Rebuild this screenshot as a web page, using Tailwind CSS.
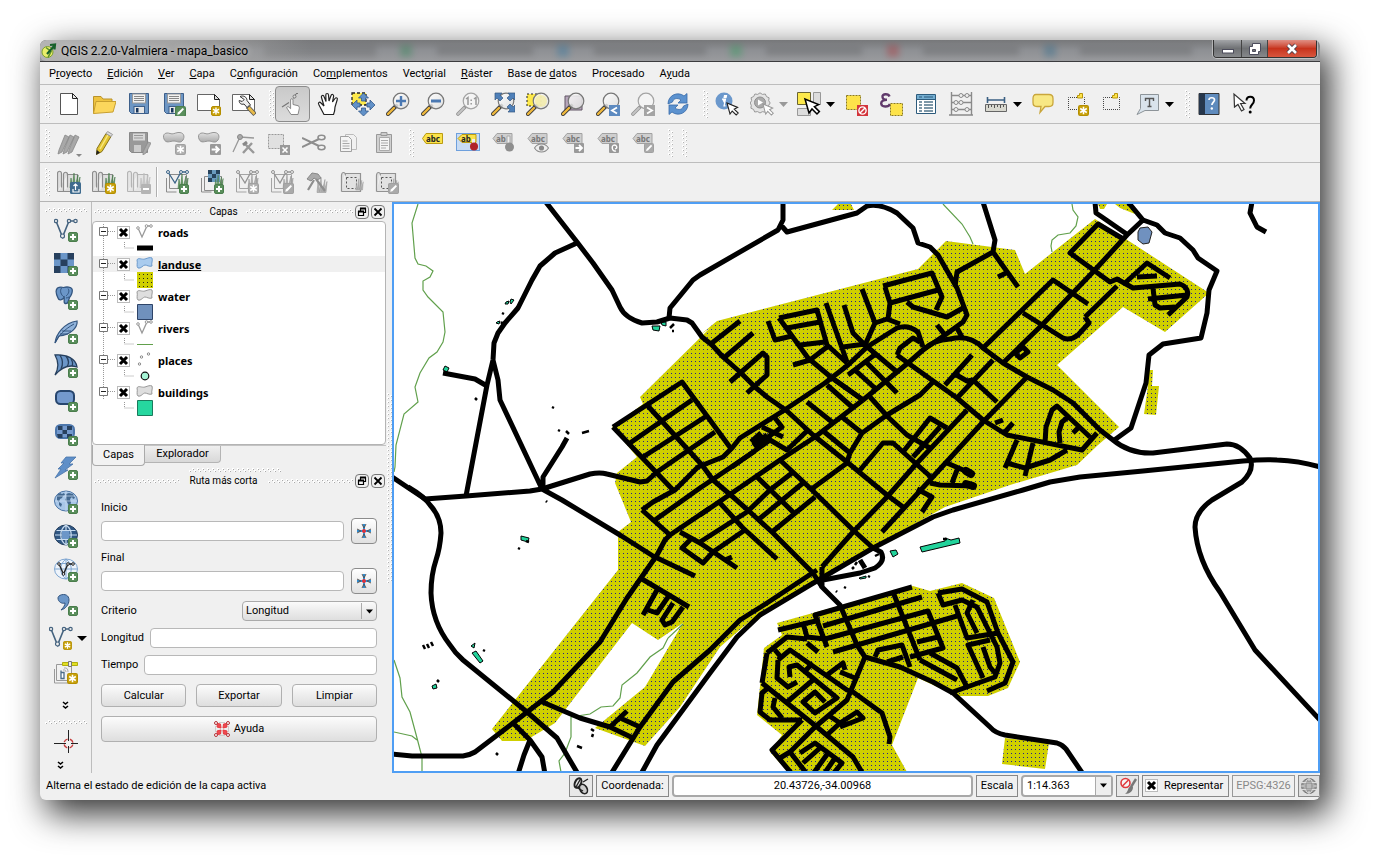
<!DOCTYPE html>
<html lang="es">
<head>
<meta charset="utf-8">
<title>QGIS 2.2.0-Valmiera - mapa_basico</title>
<script src="https://cdn.jsdelivr.net/npm/@tailwindcss/browser@4"></script>
</head>
<body class="bg-white font-['Roboto','Liberation_Sans',sans-serif] text-[11px] leading-4 text-black">

<!-- icon library -->
<svg class="absolute size-0" aria-hidden="true">
  <defs>
    <pattern id="gripV" width="6" height="4" patternUnits="userSpaceOnUse"><path d="M0 0h2v2h-2zM3 2h2v2h-2z" fill="#fff"/><path d="M1 1h1v1h-1zM4 3h1v1h-1z" fill="#b4b4b4"/></pattern>
    <pattern id="gripH" width="5" height="5" patternUnits="userSpaceOnUse"><path d="M0 2h2v2h-2zM3 0h2v2h-2z" fill="#fff"/><path d="M1 3h1v1h-1zM4 1h1v1h-1z" fill="#aaa"/></pattern>
    <pattern id="dots" x="394" y="204" width="4" height="4" patternUnits="userSpaceOnUse"><rect width="4" height="4" fill="#cfcf00"/><rect x="1" y="1" width="1" height="1" fill="#22228a"/></pattern>
    <linearGradient id="lens" x1="0" y1="0" x2="1" y2="1"><stop offset="0" stop-color="#fff"/><stop offset="1" stop-color="#dcdcdc"/></linearGradient>
    <linearGradient id="blob" x1="0" y1="0" x2="0" y2="1"><stop offset="0" stop-color="#e2e2e2"/><stop offset="1" stop-color="#aaa"/></linearGradient>
  </defs>
  <symbol id="plus" viewBox="0 0 10 10"><rect x=".5" y=".5" width="9" height="9" rx="1.5" fill="#5a8f5c" stroke="#4a7d4c"/><path d="M5 2v6M2 5h6" stroke="#fff" stroke-width="2"/></symbol>
  <symbol id="star" viewBox="0 0 10 10"><rect x=".5" y=".5" width="9" height="9" rx="1.5" fill="#c9a20c" stroke="#b48e00"/><path d="M5 1.5v7M2 3.2l6 3.6M8 3.2L2 6.800" stroke="#fff" stroke-width="1.400"/></symbol>
  <symbol id="gstar" viewBox="0 0 10 10"><rect x=".5" y=".5" width="9" height="9" rx="1.500" fill="#b0b0b0" stroke="#a0a0a0"/><path d="M5 1.5v7M2 3.200l6 3.600M8 3.200L2 6.800" stroke="#fff" stroke-width="1.400"/></symbol>
  <symbol id="pen" viewBox="0 0 10 10"><rect x=".5" y=".5" width="9" height="9" rx="1.500" fill="#5a8f5c" stroke="#4a7d4c"/><path d="M2 8l.6-2L7 1.800 8.200 3 4 7.400z" fill="#fff"/></symbol>
  <symbol id="gpen" viewBox="0 0 10 10"><rect x=".5" y=".5" width="9" height="9" rx="1" fill="#aaa" stroke="#a0a0a0"/><path d="M2 8l.6-2L7 1.800 8.200 3 4 7.400z" fill="#fff"/></symbol>
  <symbol id="garrow" viewBox="0 0 10 10"><rect width="10" height="10" rx="1" fill="#9a9a9a"/><path d="M1.500 5h6M5 2l3 3-3 3" fill="none" stroke="#fff" stroke-width="1.800"/></symbol>
  <symbol id="mag" viewBox="0 0 24 24"><path d="M2 22l8-8" stroke="#3c3c3c" stroke-width="4" stroke-linecap="round"/><path d="M2 22l6-6" stroke="#f0b93c" stroke-width="2.400" stroke-linecap="round"/><path d="M9.500 14.500l2-2" stroke="#111" stroke-width="3"/><circle cx="15" cy="9" r="7.800" fill="url(#lens)" fill-opacity=".85" stroke="#777" stroke-width="1.200"/></symbol>
  <symbol id="gmag" viewBox="0 0 24 24"><path d="M2 22l8-8" stroke="#929292" stroke-width="3.600" stroke-linecap="round"/><path d="M2 22l6-6" stroke="#c4c4c4" stroke-width="2" stroke-linecap="round"/><circle cx="15" cy="9" r="7.800" fill="#f4f4f4" stroke="#a4a4a4" stroke-width="1.200"/></symbol>
  <symbol id="ptr" viewBox="0 0 13 14"><path d="M1 1l3 11 2.200-3 4 4 2-2-4-3.800 3.400-1.800z" fill="#fff" stroke="#222" stroke-width="1.100"/></symbol>
  <symbol id="gptr" viewBox="0 0 13 14"><path d="M1 1l3 11 2.200-3 4 4 2-2-4-3.800 3.400-1.800z" fill="#fff" stroke="#999" stroke-width="1.100"/></symbol>

  <symbol id="new" viewBox="0 0 24 24"><path d="M3.500 1.500h12l5 5v16h-17z" fill="#fff" stroke="#555"/><path d="M15.500 1.500v5h5z" fill="#e8e8e8" stroke="#222"/></symbol>
  <symbol id="open" viewBox="0 0 24 24"><path d="M1.500 21.500v-17h7.500l2 2.500h9v3" fill="#eec33f" stroke="#b9922a"/><path d="M1.500 21.500L4 9.500h20l-3 10.500z" fill="#fbd65c" stroke="#c79f30"/></symbol>
  <symbol id="save" viewBox="0 0 24 24"><path d="M2.500 1.500h19v20h-17l-2-2z" fill="#6d96c4" stroke="#3d5f8a"/><rect x="5.500" y="2" width="13" height="9" fill="#f2f2f2" stroke="#999"/><path d="M7 4.500h10M7 6.500h10M7 8.500h10" stroke="#888"/><rect x="7" y="14.500" width="10.500" height="7" fill="#e6e6e6" stroke="#3d5f8a"/><path d="M9 16h2.500v4.500H9z" fill="#16345c"/></symbol>
  <symbol id="saveas" viewBox="0 0 24 24"><use href="#save"/><use href="#pen" x="13" y="14" width="11" height="11"/></symbol>
  <symbol id="comp" viewBox="0 0 24 24"><path d="M.5 2.500h17l5 5v11h-22z" fill="#fff" stroke="#666"/><path d="M17.500 2.500v5h5z" fill="#ddd" stroke="#222"/><use href="#star" x="14" y="14" width="10" height="10"/></symbol>
  <symbol id="compmgr" viewBox="0 0 24 24"><path d="M.5 2.500h17l5 5v11h-22z" fill="#fff" stroke="#666"/><path d="M17.500 2.500v5h5z" fill="#ddd" stroke="#222"/><path d="M8 4.500c3.500-1.500 7 .5 7 4l3.500 4.500-3 3-3.500-4c-3 1-5-1-4.800-3.500l3 1 2-2z" fill="#eee" stroke="#333"/><path d="M15.500 14.500l7.500 8" stroke="#555" stroke-width="4.400"/><path d="M16.500 15.500l6 6.500" stroke="#e8bb4a" stroke-width="2.800"/></symbol>
  <symbol id="touch" viewBox="0 0 24 24"><path d="M10 22.500l-4.500-7 1.600-1 2.500 2.200V8c0-1.800 2.400-1.800 2.400 0v4.500l5 1.200c1.700.5 1.500 2.500 1 4.300l-1 4.500z" fill="#fff" stroke="#888"/><path d="M1 15l7-4.500M12.500 6.500l2.500-4.500M15 1.500h2" fill="none" stroke="#777" stroke-width="1.200"/><circle cx="13.500" cy="4.500" r="1.500" fill="#ddd" stroke="#777"/></symbol>
  <symbol id="hand" viewBox="0 0 24 24"><path d="M8 22.500L3 13c-1.500-2.600.6-3.600 2-2l3 3L5.500 5.500c-.6-2.200 2-2.800 2.600-.8L10 9.500 9.800 3c0-2 2.600-2 2.700 0l.5 6L15 3.500c.6-1.800 3-1.200 2.600.8L16.500 10l2.500-3.500c1.200-1.500 3-.4 2.200 1.300L19 15c0 3-.5 5-1.500 7.500z" fill="#fff" stroke="#222" stroke-width="1.200"/></symbol>
  <symbol id="pan" viewBox="0 0 24 24"><path d="M1 1h14v12H1z" fill="#fde94c" stroke="#222" stroke-width="1.300" stroke-dasharray="3 2"/><path d="M12.500 1l5 5h-3v3h-4V6h-3zM12.500 24l5-5h-3v-3h-4v3h-3zM1 13l5-5v3h3v4H6v3zM24 13l-5-5v3h-3v4h3v3z" fill="#6191c8" stroke="#33598a" stroke-width=".8"/></symbol>
  <symbol id="zin" viewBox="0 0 24 24"><use href="#mag"/><path d="M15 4v10M10 9h10" stroke="#4a78b2" stroke-width="2.400"/></symbol>
  <symbol id="zout" viewBox="0 0 24 24"><use href="#mag"/><path d="M10 9h10" stroke="#4a78b2" stroke-width="2.800"/></symbol>
  <symbol id="z11" viewBox="0 0 24 24"><use href="#gmag"/><path d="M10 7l2-1.500V13M18 7l2-1.500V13M15.200 7.500v1.500M15.200 11v1.500" fill="none" stroke="#999" stroke-width="1.500"/></symbol>
  <symbol id="zfull" viewBox="0 0 24 24"><use href="#mag"/><path d="M4 1h7L9 3.200 12 6 9 9 6 6 4 8zM24 1h-7l2 2.200L16 6l3 3 3-3 2 2zM24 20h-7l2-2.200L16 15l3-3 3 3 2-2z" fill="#4f80b9" stroke="#35567f" stroke-width=".7"/></symbol>
  <symbol id="zsel" viewBox="0 0 24 24"><path d="M1 2h14v12H1z" fill="#fde94c" stroke="#222" stroke-dasharray="2 2"/><use href="#mag"/><circle cx="15" cy="9" r="6" fill="#f5ec9c" fill-opacity=".7"/></symbol>
  <symbol id="zlay" viewBox="0 0 24 24"><path d="M4 4h17v14H4z" fill="#b7a6bb" stroke="#605565"/><use href="#mag"/></symbol>
  <symbol id="zprev" viewBox="0 0 24 24"><use href="#mag"/><path d="M13 13h11v11H13z" fill="#5d8ac0"/><path d="M21 15.500L16 18.500l5 3" fill="none" stroke="#fff" stroke-width="1.800"/></symbol>
  <symbol id="znext" viewBox="0 0 24 24"><use href="#gmag"/><path d="M13 13h11v11H13z" fill="#a4a4a4"/><path d="M16 15.500l5 3-5 3" fill="none" stroke="#fff" stroke-width="1.800"/></symbol>
  <symbol id="refresh" viewBox="0 0 24 24"><path d="M2 12C2 3 12-1 18 4l3-2.500V11h-9l3-3c-4-3-8-1-8.500 2z" fill="#5c92cf" stroke="#386ba8" stroke-width=".8"/><path d="M22 12c0 9-10 13-16 8l-3 2.500V13h9l-3 3c4 3 8 1 8.500-2z" fill="#5c92cf" stroke="#386ba8" stroke-width=".8"/></symbol>
  <symbol id="ident" viewBox="0 0 24 24"><circle cx="9" cy="9" r="8.500" fill="#6b98cc"/><path d="M9.500 3.500h2l-.4 2h-2zM7 7h3.500L9 14h1.500" fill="#fff" stroke="#fff" stroke-width="1.200"/><use href="#ptr" x="11" y="10" width="13" height="14"/></symbol>
  <symbol id="action" viewBox="0 0 24 24"><path d="M10 .8l2.400 1.600 2.900-.4 1.200 2.600 2.600 1.200-.4 2.900L20.200 11l-1.600 2.400.4 2.900-2.600 1.200-1.200 2.600-2.900-.4L10 21l-2.400-1.400-2.900.4-1.200-2.600L.9 16.200l.4-2.900L.2 11l1.400-2.400-.5-2.900 2.600-1.200L4.900 2l2.800.4z" fill="#e4e4e4" stroke="#989898"/><circle cx="10" cy="10.500" r="5.500" fill="#aaa" stroke="#8f8f8f"/><path d="M8 7.500l5 3-5 3z" fill="#fff"/><use href="#gptr" x="12" y="11" width="12" height="13"/></symbol>
  <symbol id="select" viewBox="0 0 24 24"><path d="M.5.500h13v12H.500z" fill="#fde94c" stroke="#6a6434"/><path d="M16.500.500h7v12h-7zM.500 16.500h13v7H.500z" fill="#ddd" stroke="#999"/><path d="M8 7l4 14 3-4 5 5 2.400-2.400-5-5 4.200-2z" fill="#fff" stroke="#000" stroke-width="1.500"/></symbol>
  <symbol id="desel" viewBox="0 0 24 24"><path d="M2.500 3.500h14v14h-14z" fill="#fde34a" stroke="#8b7a20" stroke-dasharray="2 1"/><path d="M13 13h11v11H13z" fill="#d3353c"/><circle cx="18.500" cy="18.500" r="3.600" fill="none" stroke="#fff" stroke-width="1.400"/><path d="M16 21l5-5" stroke="#fff" stroke-width="1.400"/></symbol>
  <symbol id="expr" viewBox="0 0 24 24"><path d="M10.500 4.500C9.500 1.500 3 1.500 3.500 5c.2 2 2 2.800 4.500 2.800C4.500 7.800 2 9 2.200 11.500 2.500 15.500 9.500 15.500 11 12" fill="none" stroke="#613a6c" stroke-width="2.400"/><path d="M11.500 11.500h12v12h-12z" fill="#fde34a" stroke="#8b7a20" stroke-dasharray="2 1"/></symbol>
  <symbol id="table" viewBox="0 0 24 24"><path d="M2.500 2.500h19v19h-19z" fill="#fff" stroke="#2c5b7c"/><path d="M3 3h18v4H3z" fill="#73add0"/><path d="M3 7.500h18M5 5h3M10 5h9" stroke="#2c5b7c"/><path d="M5 10h3M10 10h9M5 13h3M10 13h9M5 16h3M10 16h9M5 19h3M10 19h9" stroke="#53758b" stroke-width="1.300"/></symbol>
  <symbol id="abacus" viewBox="0 0 24 24"><path d="M2.500 0v23M22.500 0v23M0 23h24M2 3.500h20M2 10.500h20M2 17.500h20" fill="none" stroke="#8a8a8a" stroke-width="1.400"/><g fill="#eee" stroke="#8a8a8a"><circle cx="12" cy="3.500" r="2"/><circle cx="18" cy="3.500" r="2"/><circle cx="7" cy="10.500" r="2"/><circle cx="12" cy="10.500" r="2"/><circle cx="7" cy="17.500" r="2"/><circle cx="18" cy="17.500" r="2"/></g></symbol>
  <symbol id="measure" viewBox="0 0 24 24"><path d="M3.500 5v6M20.500 5v6M3.500 8h17" stroke="#3a5f82" stroke-width="1.600"/><path d="M1.500 12.500h21v7h-21z" fill="#d8d8cf" stroke="#666"/><path d="M4.500 13v3M7.500 13v2M10.500 13v3M13.500 13v2M16.500 13v3M19.500 13v2" stroke="#555"/></symbol>
  <symbol id="tip" viewBox="0 0 24 24"><path d="M5 2.500h13c3 0 4 1.500 4 4v4c0 3-1 4-4 4h-4l-5 6 1-6H6c-3 0-4-1-4-4v-4c0-2.500 1-4 3-4z" fill="#f8e884" stroke="#c9a63c" stroke-width="1.300"/></symbol>
  <symbol id="bmnew" viewBox="0 0 24 24"><path d="M2.500 5.500h16v12h-16z" fill="none" stroke="#444" stroke-dasharray="1 1" stroke-dashoffset=".5"/><path d="M11.500 6v-2.500h2v-2h3V6z" fill="#fde34a" stroke="#b8960b"/><use href="#star" x="12" y="13" width="11" height="11"/></symbol>
  <symbol id="bm" viewBox="0 0 24 24"><path d="M2.500 5.500h16v12h-16z" fill="none" stroke="#444" stroke-dasharray="1 1" stroke-dashoffset=".5"/><path d="M11.500 6v-2.500h2v-2h3V6z" fill="#fde34a" stroke="#b8960b"/></symbol>
  <symbol id="tbox" viewBox="0 0 24 24"><path d="M4.500 2.500h18v16H9l-8 4 3.500-6z" fill="#d9e3ec" stroke="#8d9499"/><path d="M9.500 9V6.500h8V9M13.500 6.500v8M11.500 14.500h4" fill="none" stroke="#555" stroke-width="1.400"/></symbol>
  <symbol id="help" viewBox="0 0 24 24"><path d="M2 1.500h20v21H2z" fill="#5f8bbd" stroke="#333"/><path d="M2 1.500h6v21H2z" fill="#27374c"/><path d="M12 8c0-3 5.500-3 5.500 0 0 2-2.600 2.300-2.600 5" fill="none" stroke="#fff" stroke-width="1.700"/><circle cx="14.800" cy="16.500" r="1.200" fill="#fff"/></symbol>
  <symbol id="what" viewBox="0 0 24 24"><path d="M2 2l.5 13L6 12.500 9.500 19l2.500-1.500-3.400-6H13z" fill="#fff" stroke="#333" stroke-width="1.200"/><path d="M14.500 8.500c0-5 7.500-5 7.500 0 0 4-3.800 4-3.800 8" fill="none" stroke="#000" stroke-width="2"/><circle cx="18.200" cy="20" r="1.500"/></symbol>

  <symbol id="edits" viewBox="0 0 24 24"><g fill="#a8a8a8" stroke="#888" stroke-width=".8"><path d="M2 19L8 4l4 2-7 15-4 2zM7 19l6-15 4 2-7 15-4 2zM12 19l6-15 4 2-7 15-4 2z"/></g></symbol>
  <symbol id="pencil" viewBox="0 0 24 24"><path d="M5 17.500L14 2.500l5 3-9 15-5.500 3z" fill="#e2c431" stroke="#85721a"/><path d="M8 18l8-14" stroke="#f7e780" stroke-width="1.500"/><path d="M14 2.500l1.600-2 5 3-1.600 2z" fill="#ddd" stroke="#999"/><path d="M4 24l.8-5 3.200 2.400z" fill="#222"/></symbol>
  <symbol id="gsave" viewBox="0 0 24 24"><path d="M2.500 1.500h18v20h-16l-2-2z" fill="#999" stroke="#888"/><path d="M6 2.500h12v7H6z" fill="#d8d8d8"/><path d="M7 4.500h9M7 7h9" stroke="#999"/><path d="M7 14h7v7H7z" fill="#ccc"/><path d="M16 21l5-10 3 1-5 10-3 2z" fill="#aaa" stroke="#888" stroke-width=".7"/></symbol>
  <symbol id="feat" viewBox="0 0 24 24"><path d="M2 8C0 3 4 1 8 2.500c3 1.200 4.500-.5 8-1 6-.5 7 4 5 7.500-3 4-6 1-9 1-4 0-8 3-10-2z" fill="url(#blob)" stroke="#969696"/></symbol>
  <symbol id="addf" viewBox="0 0 24 24"><use href="#feat"/><use href="#gstar" x="13" y="13" width="11" height="11"/></symbol>
  <symbol id="movef" viewBox="0 0 24 24"><use href="#feat"/><use href="#garrow" x="13" y="13" width="11" height="11"/></symbol>
  <symbol id="node" viewBox="0 0 24 24"><path d="M1 21L8 6l14 1" fill="none" stroke="#999" stroke-width="1.300"/><circle cx="8" cy="6" r="2.500" fill="#aaa" stroke="#888"/><path d="M11 22l9-10M13 13l9 9" stroke="#999" stroke-width="2.400"/><path d="M11 14l4-3" stroke="#888" stroke-width="3"/></symbol>
  <symbol id="delsel" viewBox="0 0 24 24"><path d="M1.500 3.500h15v14h-15z" fill="#e0e0e0" stroke="#999" stroke-dasharray="2 1"/><path d="M13 14h10v10H13z" fill="#999"/><path d="M15.500 16.500l5 5M20.500 16.500l-5 5" stroke="#fff" stroke-width="1.600"/></symbol>
  <symbol id="cut" viewBox="0 0 24 24"><path d="M0 7l17 8M0 16l17-8" stroke="#8e8e8e" stroke-width="2"/><ellipse cx="19.500" cy="6.500" rx="3.500" ry="2.200" fill="none" stroke="#8e8e8e" stroke-width="1.600"/><ellipse cx="19.500" cy="16.500" rx="3.500" ry="2.200" fill="none" stroke="#8e8e8e" stroke-width="1.600"/></symbol>
  <symbol id="copy" viewBox="0 0 24 24"><path d="M8.500 3.500h8l3 3v12h-11z" fill="#f1f1f1" stroke="#bbb"/><path d="M3.500 5.500h8l3 3v12h-11z" fill="#f4f4f4" stroke="#a0a0a0"/><path d="M5.500 10h5M5.500 12.500h7M5.500 15h7M5.500 17.500h7" stroke="#aaa"/></symbol>
  <symbol id="paste" viewBox="0 0 24 24"><path d="M4.500 3.500h15v18h-15z" fill="#d0d0d0" stroke="#999"/><path d="M9 1.500h6v3H9z" fill="#ccc" stroke="#999"/><path d="M7.500 6.500h10v13h-10z" fill="#f5f5f5" stroke="#aaa"/><path d="M9 9.500h7M9 12h7M9 14.500h7M9 17h5" stroke="#aaa"/></symbol>
  <symbol id="abcG" viewBox="0 0 24 24"><path d="M2 7.500L6 2.500h15v10H6z" fill="#cfcfcf" stroke="#a2a2a2"/></symbol>
  <symbol id="eye" viewBox="0 0 14 9"><path d="M.5 4.500c3-5 10-5 13 0-3 5-10 5-13 0z" fill="#eee" stroke="#888"/><circle cx="7" cy="4.500" r="2.400" fill="#888"/></symbol>

  <symbol id="grass" viewBox="0 0 12 16"><path d="M1 16L2 6l1.500 9L5 1l1 14L9 3 8 15l3-10-1 11z" fill="#5e9a5c" stroke="#47784a" stroke-width=".6"/></symbol>
  <symbol id="ggrass" viewBox="0 0 12 16"><path d="M1 16L2 6l1.500 9L5 1l1 14L9 3 8 15l3-10-1 11z" fill="#b4b4b4" stroke="#989898" stroke-width=".6"/></symbol>
  <symbol id="rolls" viewBox="0 0 24 24"><path d="M.5 21.500v-18c0-3 4-3 4 0v14M6.500 21.500v-17c0-3 4-3 4 0v13M.5 21.500h20v-17h-10" fill="#dedede" stroke="#8c8c8c" stroke-width="1.200"/></symbol>
  <symbol id="gopen" viewBox="0 0 24 24"><use href="#rolls"/><use href="#grass" x="12" y="2" width="12" height="16"/><rect x="13" y="12" width="11" height="12" rx="1.500" fill="#3f6b8e"/><path d="M16 19v3h6v-3M18.500 20v-6M16.500 16l2-2 2 2" fill="none" stroke="#fff" stroke-width="1.200"/></symbol>
  <symbol id="gnew" viewBox="0 0 24 24"><use href="#rolls"/><use href="#grass" x="12" y="2" width="12" height="16"/><use href="#star" x="13" y="13" width="11" height="11"/></symbol>
  <symbol id="gclose" viewBox="0 0 24 24"><g opacity=".6"><use href="#rolls"/><use href="#ggrass" x="12" y="2" width="12" height="16"/></g><rect x="14" y="14" width="10" height="10" rx="1" fill="#b4b4b4"/><path d="M16 19h6" stroke="#fff" stroke-width="2"/></symbol>
  <symbol id="gvec" viewBox="0 0 24 24"><path d="M1.500 8v14h10M4.500 4.500h17v14h-17z" fill="#efefef" stroke="#8c8c8c"/><use href="#grass" x="12" y="3" width="12" height="16"/><path d="M3 2l7 11 6-11h6" fill="none" stroke="#3b6488" stroke-width="1.300"/><g fill="#efefef" stroke="#3b6488"><circle cx="3" cy="2" r="1.500"/><circle cx="16" cy="2" r="1.500"/><circle cx="22" cy="2" r="1.500"/></g><use href="#plus" x="14" y="14" width="10" height="10"/></symbol>
  <symbol id="gras" viewBox="0 0 24 24"><path d="M1.500 8v14h10M4.500 6.500h17v14h-17z" fill="#efefef" stroke="#8c8c8c"/><path d="M8 0h12v12H8z" fill="#6a9bbf"/><path d="M8 0h4v4H8zM16 0h4v4h-4zM12 4h4v4h-4zM8 8h4v4H8z" fill="#27435c"/><use href="#grass" x="14" y="4" width="10" height="14"/><use href="#plus" x="14" y="14" width="10" height="10"/></symbol>
  <symbol id="gv0" viewBox="0 0 24 24"><path d="M1.500 8v14h10M4.500 4.500h17v14h-17z" fill="#efefef" stroke="#a4a4a4"/><use href="#ggrass" x="12" y="3" width="12" height="16"/><path d="M3 2l7 11 6-11h6" fill="none" stroke="#929292" stroke-width="1.300"/><g fill="#efefef" stroke="#929292"><circle cx="3" cy="2" r="1.500"/><circle cx="16" cy="2" r="1.500"/><circle cx="22" cy="2" r="1.500"/></g></symbol>
  <symbol id="gvnew" viewBox="0 0 24 24"><use href="#gv0"/><use href="#gstar" x="13" y="13" width="11" height="11"/></symbol>
  <symbol id="gvedit" viewBox="0 0 24 24"><use href="#gv0"/><use href="#gpen" x="13" y="13" width="11" height="11"/></symbol>
  <symbol id="gtools" viewBox="0 0 24 24"><use href="#ggrass" x="11" y="6" width="12" height="17"/><path d="M2 9l5-6 6 1 3 4-4 2-3-2-3 3z" fill="#aaa" stroke="#888"/><path d="M11 9l9 12M9 10L3 20" fill="none" stroke="#8e8e8e" stroke-width="2.200"/></symbol>
  <symbol id="greg" viewBox="0 0 24 24"><path d="M1.500 21.500v-16c0-4 4-4 4 0M1.500 21.500h19v-18h-16" fill="#e2e2e2" stroke="#929292" stroke-width="1.200"/><path d="M6.500 7.500h10v11h-10z" fill="none" stroke="#555" stroke-dasharray="2 2"/><use href="#ggrass" x="15" y="5" width="9" height="18"/></symbol>
  <symbol id="gregedit" viewBox="0 0 24 24"><use href="#greg"/><use href="#gpen" x="13" y="13" width="11" height="11"/></symbol>

  <symbol id="vline" viewBox="0 0 24 24"><path d="M2 3l6.500 16L15 3h7" fill="none" stroke="#45637f" stroke-width="1.600"/><g fill="#efefef" stroke="#45637f" stroke-width="1.200"><circle cx="2" cy="3" r="1.700"/><circle cx="15" cy="3" r="1.700"/><circle cx="21.500" cy="3" r="1.700"/><circle cx="8.500" cy="18" r="2"/></g></symbol>
  <symbol id="addv" viewBox="0 0 24 24"><use href="#vline"/><use href="#plus" x="14" y="14" width="10" height="10"/></symbol>
  <symbol id="addr" viewBox="0 0 24 24"><path d="M0 1h20v20H0z" fill="#6b96c8"/><path d="M0 1h6.500v6.500H0zM13.500 1H20v6.500h-6.500zM6.500 7.500h7V14h-7zM0 14h6.500v7H0zM13.500 14H20v7h-6.500z" fill="#27405e"/><use href="#plus" x="14" y="14" width="10" height="10"/></symbol>
  <symbol id="addpg" viewBox="0 0 24 24"><path d="M3.500 2C6 .5 8 1 9.500 1.500 13 .5 17 1 18 3c1 3-1 7-2.500 8.500L14 16c-.5 2-3.800 2-3.800 0v-4.500C8 14 5 15 4 12 2 8 1.500 4 3.500 2z" fill="#6b96c8" stroke="#33557f" stroke-width="1.300"/><path d="M7.500 2c-2 3-.5 7 2.500 9M14 2.500c2 3 0 6-2 7.500M12 12c1 0 2-.5 3-1" fill="none" stroke="#33557f"/><use href="#plus" x="14" y="14" width="10" height="10"/></symbol>
  <symbol id="addsl" viewBox="0 0 24 24"><path d="M1 23C2 14 10 3 23 1c1 6-6 14-18 15z" fill="#8fb2da" stroke="#33557f" stroke-width="1.200"/><path d="M1 23C5 15 11 9 20 4M8 11h9M6 14h8" fill="none" stroke="#33557f"/><use href="#plus" x="14" y="14" width="10" height="10"/></symbol>
  <symbol id="addms" viewBox="0 0 24 24"><path d="M1 1c12-1 21 4 22 12-9-3-16 1-22 8 4-7 4-13 0-20z" fill="#6b96c8" stroke="#27405e" stroke-width="1.300"/><path d="M6 1c3 5 3 10 1 14M12 2c3 4 3 8 1 11M17 5c2 3 2 5 1 7" fill="none" stroke="#27405e" stroke-width="1.300"/><use href="#plus" x="14" y="14" width="10" height="10"/></symbol>
  <symbol id="addora" viewBox="0 0 24 24"><rect x="2" y="3" width="18" height="13" rx="4.500" fill="#7399cd" stroke="#27466e" stroke-width="2"/><use href="#plus" x="14" y="14" width="10" height="10"/></symbol>
  <symbol id="addorr" viewBox="0 0 24 24"><rect x="2" y="3" width="18" height="13" rx="4.500" fill="#7399cd" stroke="#4c76ab" stroke-width="2"/><path d="M4 4h4.500v4H4zM13 4h5v4h-5zM8.500 8H13v4H8.500zM3 12h5.500v4H4zM13 12h5v4h-5z" fill="#27405e"/><use href="#plus" x="14" y="14" width="10" height="10"/></symbol>
  <symbol id="addsa" viewBox="0 0 24 24"><path d="M12 1h10l-7 7h4l-8 6h3L1 22l6-9H4l6-6H7z" fill="#5f8fc8" stroke="#4774aa" stroke-width=".8"/><use href="#plus" x="14" y="14" width="10" height="10"/></symbol>
  <symbol id="addwms" viewBox="0 0 24 24"><ellipse cx="12" cy="11" rx="11.500" ry="10" fill="#a9c7e8" stroke="#4b74a5"/><path d="M3 5l3-2 2 1 2-1 1 2-2 1-1 2-2 1-1 3-2-2zM12 4l3-1 4 1 2 4-2 1-1-2-2 2 1 4-2 3-2-4-2-2 1-2zM5 12l3 2-1 3-2-2z" fill="#43688f"/><path d="M1 11h22M3 6h18M12 1v20" stroke="#cfe0f2" stroke-width=".7"/><use href="#plus" x="14" y="14" width="10" height="10"/></symbol>
  <symbol id="addwcs" viewBox="0 0 24 24"><ellipse cx="12" cy="11" rx="11.500" ry="10" fill="#2f5682" stroke="#27405e"/><path d="M1 11h22M2.500 6.500h19M2.500 15.500h19M12 1v20M12 1c-7 5-7 15 0 20M12 1c7 5 7 15 0 20" fill="none" stroke="#c8dcf0" stroke-width="1.200"/><path d="M8 7h7.500v8H8z" fill="#6b96c8"/><use href="#plus" x="14" y="14" width="10" height="10"/></symbol>
  <symbol id="addwfs" viewBox="0 0 24 24"><ellipse cx="12" cy="11" rx="11.500" ry="10" fill="#eef4fb" stroke="#7fa6d1"/><path d="M1 11h22M2.500 5.500h19M12 1v20M12 1c-7 5-7 15 0 20M12 1c7 5 7 15 0 20" fill="none" stroke="#7fa6d1"/><path d="M5 6l4.500 10L14 6h5" fill="none" stroke="#222" stroke-width="1.400"/><g fill="#fff" stroke="#222"><circle cx="5" cy="6" r="1.300"/><circle cx="14" cy="6" r="1.300"/><circle cx="19" cy="6" r="1.300"/><circle cx="9.500" cy="16" r="1.300"/></g><use href="#plus" x="14" y="14" width="10" height="10"/></symbol>
  <symbol id="addcsv" viewBox="0 0 24 24"><path d="M4 6c0-4 11-6 11 2 0 5-4 9-8 10 3-3 4-5 4-7-3 1-7-1-7-5z" fill="#6b96c8" stroke="#33557f"/><use href="#plus" x="14" y="14" width="10" height="10"/></symbol>
  <symbol id="newv" viewBox="0 0 24 24"><use href="#vline"/><use href="#star" x="14" y="15" width="9" height="9"/></symbol>
  <symbol id="gps" viewBox="0 0 24 24"><path d="M.5 9v14h16M2.500 4.500h15v16h-15z" fill="#f1f1f1" stroke="#999"/><path d="M7 12.500h3v6H7zM7 12.500v-2" fill="#fff" stroke="#4b6c88" stroke-width="1.300"/><path d="M8.500 2.500h6v3h-6zM17.500 2.500h6v3h-6z" fill="#e2df23" stroke="#b0ad10"/><path d="M14.500 1.500h3v5h-3z" fill="#eee" stroke="#777"/><path d="M9 10c2-.500 3 .500 3 2M10 8c3-.500 4 1 4 4" fill="none" stroke="#aaa"/><use href="#star" x="13" y="13" width="11" height="11"/></symbol>
  <symbol id="cross" viewBox="0 0 24 24"><path d="M14.500 0v11M14.500 16v7M0 13.500h12M17 13.500h7" stroke="#222"/><circle cx="14.500" cy="13.500" r="4.500" fill="none" stroke="#c43a3a" stroke-width="1.400" stroke-dasharray="4.500 2.500" stroke-dashoffset="-1.200"/></symbol>
  <symbol id="more" viewBox="0 0 8 9"><path d="M1 1l2.500 2L6 1M1 5l2.500 2L6 5" fill="none" stroke="#000" stroke-width="1.600"/></symbol>
  <symbol id="dd" viewBox="0 0 9 5"><path d="M0 0h9L4.500 5z" fill="currentColor"/></symbol>
  <symbol id="target" viewBox="0 0 16 16"><path d="M8 1v14M1 8h14" stroke="#2e8fd6" stroke-width="2"/><path d="M6 1l2 4 2-4M6 15l2-4 2 4M1 6l4 2-4 2M15 6l-4 2 4 2" fill="none" stroke="#555"/><circle cx="8" cy="8" r="2" fill="#e0303a"/></symbol>
  <symbol id="float" viewBox="0 0 14 14"><path d="M5.500 6V3.500h5v4H9M3.500 6.500h5v4h-5z" fill="none" stroke="#000" stroke-width="1.200"/><path d="M5 3.500h6M3 6.500h6" stroke="#000" stroke-width="2"/></symbol>
  <symbol id="shut" viewBox="0 0 14 14"><path d="M3.500 3.500l7 7M10.500 3.500l-7 7" stroke="#000" stroke-width="1.800"/></symbol>
  <symbol id="tline" viewBox="0 0 17 16"><path d="M2 4l4 9 5-11h4" fill="none" stroke="#999" stroke-width="1.300"/><g fill="#fff" stroke="#999"><circle cx="2" cy="4" r="1.300"/><circle cx="10.500" cy="2" r="1.300"/><circle cx="15" cy="2" r="1.300"/></g></symbol>
  <symbol id="tpoly" viewBox="0 0 17 16"><path d="M1 4c1-3 5 0 8-1s5-2 7-1c1 3-1 5 0 8-3 1-5-1-7-1s-4 4-7 3c-2-2 0-5-1-8z" fill="#dedede" stroke="#999"/></symbol>
  <symbol id="tpolyb" viewBox="0 0 17 16"><path d="M1 4c1-3 5 0 8-1s5-2 7-1c1 3-1 5 0 8-3 1-5-1-7-1s-4 4-7 3c-2-2 0-5-1-8z" fill="#a9cbee" stroke="#6c9acc"/></symbol>
  <symbol id="tpt" viewBox="0 0 17 16"><g fill="#fff" stroke="#888"><circle cx="5.500" cy="5" r="1.200"/><circle cx="12.500" cy="2" r="1.200"/><circle cx="3.500" cy="12" r="1.200"/></g></symbol>
  <symbol id="life" viewBox="0 0 16 16"><path d="M3.500 2.500l3 .5.500 4-4-1zM12.500 2.500l-3 .5-.5 4 4-1zM3.500 13.500l3-.5.500-4-4 1zM12.500 13.500l-3-.5-.5-4 4 1z" fill="#ee4a50" stroke="#e8383f"/><path d="M5 1.500h6M5 14.500h6M1.500 5v6M14.500 5v6" stroke="#ccc"/><g fill="#fff" stroke="#b03036"><circle cx="2" cy="2" r="1.500"/><circle cx="14" cy="2" r="1.500"/><circle cx="2" cy="14" r="1.500"/><circle cx="14" cy="14" r="1.500"/></g></symbol>
</svg>

<div class="flex min-h-screen flex-col pt-10 pr-[60px] pb-[60px] pl-10">
<main class="flex min-h-[760px] flex-1 flex-col overflow-hidden rounded-md bg-[#f0f0f0] shadow-[8px_12px_34px_2px_rgba(0,0,0,0.8)]">

  <!-- title bar -->
  <header class="relative flex h-[22px] items-center border-b border-[#3c3c3e] bg-linear-to-b from-[#77787a] via-[#8e9094] to-[#9a9b9e]">
    <div class="absolute inset-0 flex items-center justify-between overflow-hidden pr-32 pl-56 opacity-25 blur-[3px]" aria-hidden="true">
      <span class="h-3 w-28 bg-[#555]"></span><span class="h-3 w-3 bg-green-700"></span><span class="h-2 w-24 bg-[#444]"></span><span class="h-3 w-3 bg-sky-700"></span><span class="h-2 w-28 bg-[#444]"></span><span class="h-3 w-3 bg-green-600"></span><span class="h-2 w-24 bg-[#444]"></span><span class="h-3 w-3 bg-red-700"></span><span class="h-2 w-24 bg-[#444]"></span><span class="h-3 w-3 bg-sky-800"></span><span class="h-2 w-28 bg-[#444]"></span>
    </div>
    <div class="relative flex h-full items-center gap-1 rounded-l-md bg-linear-to-r from-[#b4b4b4] via-[#a2a2a2] to-transparent pr-16">
      <svg class="ml-px size-4" viewBox="0 0 16 16"><circle cx="6.500" cy="9" r="5.500" fill="#e9ee6a" stroke="#7da02c"/><path d="M5 4.500l5 4-3 6" fill="none" stroke="#5a8f2c" stroke-width="1.600"/><path d="M6 11L14 2M9 2l5-.500-.500 5" fill="none" stroke="#16602a" stroke-width="2.200"/></svg>
      <h1 class="pt-px text-[12px] leading-5 [text-shadow:0_0_6px_#ddd]">QGIS 2.2.0-Valmiera - mapa_basico</h1>
    </div>
    <div class="relative mr-[3px] mb-[3px] ml-auto flex h-[18px] overflow-hidden rounded-b border border-t-0 border-[#333] ring-1 ring-white/40">
      <button class="flex w-[27px] items-center justify-center bg-linear-to-b from-[#a3a5a8] via-[#6f7174] to-[#86888b]" aria-label="Minimizar"><svg class="size-3" viewBox="0 0 12 12"><rect x=".5" y="6.500" width="11" height="3.500" fill="#fff" stroke="#4c4c5c"/></svg></button>
      <button class="flex w-[27px] items-center justify-center border-x border-[#444] bg-linear-to-b from-[#a3a5a8] via-[#6f7174] to-[#86888b]" aria-label="Restaurar"><svg class="size-3" viewBox="0 0 12 12"><path d="M3.500.500h8v8h-2v3h-9v-8h3z" fill="#fff" stroke="#4c4c5c"/><path d="M3.500 6.500h3v2h-3z" fill="#777" stroke="#4c4c5c"/></svg></button>
      <button class="flex w-12 items-center justify-center bg-linear-to-b from-[#e08f84] via-[#c7331c] to-[#d8553d]" aria-label="Cerrar"><svg class="size-3" viewBox="0 0 12 12"><path d="M2 2l8 8M10 2l-8 8" stroke="#4c3c48" stroke-width="4.500"/><path d="M2 2l8 8M10 2l-8 8" stroke="#fff" stroke-width="2.600"/></svg></button>
    </div>
  </header>

  <!-- menu bar -->
  <nav class="flex h-[23px] items-center gap-[15px] border-b border-[#bdbdbd] pt-0.5 pl-[9px]">
    <a href="#">P<u>r</u>oyecto</a><a href="#"><u>E</u>dición</a><a href="#"><u>V</u>er</a><a href="#"><u>C</u>apa</a><a href="#">C<u>o</u>nfiguración</a><a href="#">Co<u>m</u>plementos</a><a href="#">Vect<u>o</u>rial</a><a href="#"><u>R</u>áster</a><a href="#">Base de <u>d</u>atos</a><a href="#">Procesado</a><a href="#">A<u>y</u>uda</a>
  </nav>

  <!-- toolbar: project, navigation, attributes -->
  <div class="flex h-[39px] items-center border-b border-[#bdbdbd] pl-[5px] [&>button]:flex [&>button]:h-9 [&>button]:w-[35px] [&>button]:shrink-0 [&>button]:items-center [&>button]:justify-center [&>button>svg]:size-6" role="toolbar">
    <svg class="h-7 w-1.5 shrink-0"><rect width="6" height="28" fill="url(#gripV)"/></svg>
    <button aria-label="Nuevo"><svg><use href="#new"/></svg></button>
    <button aria-label="Abrir"><svg><use href="#open"/></svg></button>
    <button aria-label="Guardar"><svg><use href="#save"/></svg></button>
    <button aria-label="Guardar como"><svg><use href="#saveas"/></svg></button>
    <button aria-label="Nuevo diseñador"><svg><use href="#comp"/></svg></button>
    <button aria-label="Administrador de diseñadores"><svg><use href="#compmgr"/></svg></button>
    <svg class="ml-2 h-7 w-1.5 shrink-0"><rect width="6" height="28" fill="url(#gripV)"/></svg>
    <button class="rounded-sm border border-[#8c8c8c] bg-linear-to-b from-[#c9c9c9] to-[#dcdcdc]" aria-label="Zoom táctil"><svg><use href="#touch"/></svg></button>
    <button aria-label="Desplazar mapa"><svg><use href="#hand"/></svg></button>
    <button aria-label="Desplazar a la selección"><svg><use href="#pan"/></svg></button>
    <button aria-label="Acercar"><svg><use href="#zin"/></svg></button>
    <button aria-label="Alejar"><svg><use href="#zout"/></svg></button>
    <button aria-label="Zoom 1:1"><svg><use href="#z11"/></svg></button>
    <button aria-label="Zoom general"><svg><use href="#zfull"/></svg></button>
    <button aria-label="Zoom a la selección"><svg><use href="#zsel"/></svg></button>
    <button aria-label="Zoom a la capa"><svg><use href="#zlay"/></svg></button>
    <button aria-label="Zoom anterior"><svg><use href="#zprev"/></svg></button>
    <button aria-label="Zoom siguiente"><svg><use href="#znext"/></svg></button>
    <button aria-label="Actualizar"><svg><use href="#refresh"/></svg></button>
    <svg class="ml-2 h-7 w-1.5 shrink-0"><rect width="6" height="28" fill="url(#gripV)"/></svg>
    <button aria-label="Identificar"><svg><use href="#ident"/></svg></button>
    <button aria-label="Acción"><svg><use href="#action"/></svg></button>
    <svg class="mr-[3px] h-[5px] w-[9px] shrink-0 text-[#999]"><use href="#dd"/></svg>
    <button aria-label="Seleccionar"><svg><use href="#select"/></svg></button>
    <svg class="mr-[3px] h-[5px] w-[9px] shrink-0"><use href="#dd"/></svg>
    <button aria-label="Deseleccionar"><svg><use href="#desel"/></svg></button>
    <button aria-label="Seleccionar por expresión"><svg><use href="#expr"/></svg></button>
    <button aria-label="Tabla de atributos"><svg><use href="#table"/></svg></button>
    <button aria-label="Calculadora de campos"><svg><use href="#abacus"/></svg></button>
    <button aria-label="Medir"><svg><use href="#measure"/></svg></button>
    <svg class="mr-[3px] h-[5px] w-[9px] shrink-0"><use href="#dd"/></svg>
    <button aria-label="Avisos del mapa"><svg><use href="#tip"/></svg></button>
    <button aria-label="Nuevo marcador"><svg><use href="#bmnew"/></svg></button>
    <button aria-label="Marcadores"><svg><use href="#bm"/></svg></button>
    <button aria-label="Anotación de texto"><svg><use href="#tbox"/></svg></button>
    <svg class="mr-[3px] h-[5px] w-[9px] shrink-0"><use href="#dd"/></svg>
    <svg class="ml-2 h-7 w-1.5 shrink-0"><rect width="6" height="28" fill="url(#gripV)"/></svg>
    <button aria-label="Contenido de la ayuda"><svg><use href="#help"/></svg></button>
    <button aria-label="¿Qué es esto?"><svg><use href="#what"/></svg></button>
  </div>

  <!-- toolbar: editing, labels -->
  <div class="flex h-[39px] items-center border-b border-[#bdbdbd] pl-[5px] [&>button]:flex [&>button]:h-9 [&>button]:w-[35px] [&>button]:shrink-0 [&>button]:items-center [&>button]:justify-center [&>button>svg]:size-6 [&_text]:fill-[#777] [&_text]:font-['Noto_Sans',sans-serif] [&_text]:font-bold" role="toolbar">
    <svg class="h-7 w-1.5 shrink-0"><rect width="6" height="28" fill="url(#gripV)"/></svg>
    <button class="relative" aria-label="Ediciones actuales"><svg><use href="#edits"/></svg><i class="absolute right-1 bottom-1 border-x-[3px] border-t-[3px] border-x-transparent border-t-[#888]"></i></button>
    <button aria-label="Conmutar edición"><svg><use href="#pencil"/></svg></button>
    <button aria-label="Guardar ediciones"><svg><use href="#gsave"/></svg></button>
    <button aria-label="Añadir objeto"><svg><use href="#addf"/></svg></button>
    <button aria-label="Mover objeto"><svg><use href="#movef"/></svg></button>
    <button aria-label="Herramienta de nodos"><svg><use href="#node"/></svg></button>
    <button aria-label="Borrar seleccionados"><svg><use href="#delsel"/></svg></button>
    <button aria-label="Cortar"><svg><use href="#cut"/></svg></button>
    <button aria-label="Copiar"><svg><use href="#copy"/></svg></button>
    <button aria-label="Pegar"><svg><use href="#paste"/></svg></button>
    <svg class="ml-2 h-7 w-1.5 shrink-0"><rect width="6" height="28" fill="url(#gripV)"/></svg>
    <button aria-label="Opciones de etiquetado"><svg viewBox="0 0 24 24"><path d="M1.500 7.500L5 2.500h16.500v10H5z" fill="#fbe24a" stroke="#bb9c12"/><text x="5" y="10.500" font-size="8" class="fill-[#222]!">abc</text></svg></button>
    <button aria-label="Fijar etiquetas resaltadas"><svg viewBox="0 0 24 24"><rect x=".5" y="2.500" width="23" height="17" fill="#c9dcf3" stroke="#6ea0dd"/><path d="M2 7.500L6 3.500h14v8H6z" fill="#fbe24a" stroke="#bb9c12"/><text x="5" y="10.500" font-size="8" class="fill-[#222]!">ab</text><path d="M16 8h3v8h-3z" fill="#eee"/><circle cx="18" cy="15.500" r="4" fill="#b02329"/></svg></button>
    <button aria-label="Fijar etiqueta"><svg viewBox="0 0 24 24"><use href="#abcG"/><text x="5" y="10.500" font-size="8">ab</text><path d="M16 5h3v8h-3z" fill="#eee" stroke="#aaa"/><circle cx="18.500" cy="16" r="4.500" fill="#8e8e8e"/></svg></button>
    <button aria-label="Mostrar etiqueta"><svg viewBox="0 0 24 24"><use href="#abcG"/><text x="5" y="10.500" font-size="8">abc</text><use href="#eye" x="8" y="12" width="15" height="10"/></svg></button>
    <button aria-label="Mover etiqueta"><svg viewBox="0 0 24 24"><use href="#abcG"/><text x="5" y="10.500" font-size="8">abc</text><use href="#garrow" x="13" y="12" width="10" height="10"/></svg></button>
    <button aria-label="Rotar etiqueta"><svg viewBox="0 0 24 24"><use href="#abcG"/><text x="5" y="10.500" font-size="8">abc</text><rect x="13" y="12" width="10" height="10" rx="1" fill="#999"/><path d="M20 20c-4 1-5-5-2-6 3 0 4 3 1 4" fill="none" stroke="#fff" stroke-width="1.300"/></svg></button>
    <button aria-label="Cambiar etiqueta"><svg viewBox="0 0 24 24"><use href="#abcG"/><text x="5" y="10.500" font-size="8">abc</text><use href="#gpen" x="13" y="12" width="10" height="10"/></svg></button>
    <svg class="ml-2 h-7 w-1.5 shrink-0"><rect width="6" height="28" fill="url(#gripV)"/></svg>
    <svg class="ml-2 h-7 w-1.5 shrink-0"><rect width="6" height="28" fill="url(#gripV)"/></svg>
  </div>

  <!-- toolbar: GRASS -->
  <div class="flex h-[39px] items-center border-b border-[#b4b4b4] pl-[5px] [&>button]:flex [&>button]:h-9 [&>button]:w-[35px] [&>button]:shrink-0 [&>button]:items-center [&>button]:justify-center [&>button>svg]:size-6" role="toolbar">
    <svg class="h-7 w-1.5 shrink-0"><rect width="6" height="28" fill="url(#gripV)"/></svg>
    <button aria-label="Abrir directorio de mapas"><svg><use href="#gopen"/></svg></button>
    <button aria-label="Nuevo directorio de mapas"><svg><use href="#gnew"/></svg></button>
    <button aria-label="Cerrar directorio de mapas"><svg><use href="#gclose"/></svg></button>
    <span class="mr-px h-[30px] w-0.5 border-l border-[#b0b0b0] bg-white"></span>
    <button aria-label="Añadir vectorial GRASS"><svg><use href="#gvec"/></svg></button>
    <button aria-label="Añadir ráster GRASS"><svg><use href="#gras"/></svg></button>
    <button aria-label="Crear vectorial GRASS"><svg><use href="#gvnew"/></svg></button>
    <button aria-label="Editar vectorial GRASS"><svg><use href="#gvedit"/></svg></button>
    <button aria-label="Herramientas GRASS"><svg><use href="#gtools"/></svg></button>
    <button aria-label="Región GRASS"><svg><use href="#greg"/></svg></button>
    <button aria-label="Editar región GRASS"><svg><use href="#gregedit"/></svg></button>
  </div>

  <div class="flex min-h-0 flex-1">
    <!-- layer toolbar -->
    <aside class="flex w-[52px] shrink-0 flex-col items-center border-r border-[#bdbdbd] pt-1.5 [&>button]:flex [&>button]:h-[34px] [&>button]:w-full [&>button]:items-center [&>button]:justify-center [&>button>svg]:size-6" role="toolbar">
      <svg class="h-[5px] w-[42px]"><rect width="42" height="5" fill="url(#gripH)"/></svg>
      <button aria-label="Añadir capa vectorial"><svg><use href="#addv"/></svg></button>
      <button aria-label="Añadir capa ráster"><svg><use href="#addr"/></svg></button>
      <button aria-label="Añadir capa PostGIS"><svg><use href="#addpg"/></svg></button>
      <button aria-label="Añadir capa SpatiaLite"><svg><use href="#addsl"/></svg></button>
      <button aria-label="Añadir capa MSSQL"><svg><use href="#addms"/></svg></button>
      <button aria-label="Añadir capa Oracle"><svg><use href="#addora"/></svg></button>
      <button aria-label="Añadir ráster Oracle"><svg><use href="#addorr"/></svg></button>
      <button aria-label="Añadir capa SQL Anywhere"><svg><use href="#addsa"/></svg></button>
      <button aria-label="Añadir capa WMS"><svg><use href="#addwms"/></svg></button>
      <button aria-label="Añadir capa WCS"><svg><use href="#addwcs"/></svg></button>
      <button aria-label="Añadir capa WFS"><svg><use href="#addwfs"/></svg></button>
      <button aria-label="Añadir texto delimitado"><svg><use href="#addcsv"/></svg></button>
      <button class="gap-1 pl-1" aria-label="Nueva capa"><svg class="shrink-0"><use href="#newv"/></svg><i class="border-x-[5px] border-t-[5px] border-x-transparent border-t-black"></i></button>
      <button aria-label="Nueva capa GPX"><svg><use href="#gps"/></svg></button>
      <svg class="mt-3 h-[9px] w-2"><use href="#more"/></svg>
      <svg class="mt-2.5 h-[5px] w-[42px]"><rect width="42" height="5" fill="url(#gripH)"/></svg>
      <button aria-label="Captura de coordenadas"><svg><use href="#cross"/></svg></button>
      <svg class="mt-0.5 mr-2.5 h-[9px] w-2"><use href="#more"/></svg>
    </aside>

    <!-- docks -->
    <section class="flex w-[294px] shrink-0 flex-col">
      <div class="flex h-[19px] items-center gap-0.5 pr-px pl-0.5 [&>button]:h-3.5 [&>button]:w-3.5 [&>button]:rounded-sm [&>button]:border [&>button]:border-[#777]">
        <svg class="h-[5px] flex-1"><rect width="100%" height="5" fill="url(#gripH)"/></svg><h2 class="px-1.5 text-[10px]">Capas</h2><svg class="h-[5px] flex-1"><rect width="100%" height="5" fill="url(#gripH)"/></svg>
        <button aria-label="Desacoplar capas"><svg viewBox="1 1 12 12"><use href="#float" width="14" height="14"/></svg></button><button aria-label="Cerrar capas"><svg viewBox="1 1 12 12"><use href="#shut" width="14" height="14"/></svg></button>
      </div>
      <ul id="layers" class="h-[224px] rounded-sm border border-[#b4b4b4] bg-white pt-0.5 font-['Noto_Sans',sans-serif] text-[11px] font-bold"></ul>
      <div class="flex items-start border-t border-[#c4c4c4] text-[11px]">
        <button class="-mt-px h-[21px] w-[53px] rounded-b-sm border border-t-0 border-[#aaa] bg-[#f2f2f2]">Capas</button>
        <button class="h-[17px] w-[76px] rounded-br-sm border border-t-0 border-l-0 border-[#b4b4b4] bg-linear-to-b from-[#efefef] to-[#d8d8d8] leading-4">Explorador</button>
      </div>
      <svg class="mt-0.5 ml-[97px] h-[5px] w-[92px] shrink-0"><rect width="92" height="5" fill="url(#gripH)"/></svg>
      <div class="flex h-4 items-center gap-0.5 pr-px pl-0.5 [&>button]:h-3.5 [&>button]:w-3.5 [&>button]:rounded-sm [&>button]:border [&>button]:border-[#777]">
        <svg class="h-[5px] flex-1"><rect width="100%" height="5" fill="url(#gripH)"/></svg><h2 class="px-2 text-[10px]">Ruta más corta</h2><svg class="h-[5px] flex-1"><rect width="100%" height="5" fill="url(#gripH)"/></svg>
        <button aria-label="Desacoplar ruta"><svg viewBox="1 1 12 12"><use href="#float" width="14" height="14"/></svg></button><button aria-label="Cerrar ruta"><svg viewBox="1 1 12 12"><use href="#shut" width="14" height="14"/></svg></button>
      </div>

      <form class="flex flex-col pt-[11px] pr-[9px] pl-[9px] [&_input]:h-5 [&_input]:min-w-0 [&_input]:flex-1 [&_input]:rounded-sm [&_input]:border [&_input]:border-[#b8b8b8] [&_input]:bg-white [&_input]:px-1">
        <label for="ini">Inicio</label>
        <div class="mt-0.5 flex items-center gap-[7px]"><input id="ini" type="text"><button type="button" aria-label="Capturar inicio" class="flex size-[26px] items-center justify-center rounded-sm border border-[#8c8c8c] bg-linear-to-b from-white to-[#e0e0e0]"><svg class="size-4"><use href="#target"/></svg></button></div>
        <label for="fin" class="mt-1.5">Final</label>
        <div class="mt-0.5 flex items-center gap-[7px]"><input id="fin" type="text"><button type="button" aria-label="Capturar final" class="flex size-[26px] items-center justify-center rounded-sm border border-[#8c8c8c] bg-linear-to-b from-white to-[#e0e0e0]"><svg class="size-4"><use href="#target"/></svg></button></div>
        <div class="relative mt-[7px] flex items-center justify-between"><label for="crit">Criterio</label>
          <select id="crit" class="h-5 w-[135px] appearance-none rounded-sm border border-[#aaa] bg-linear-to-b from-[#fafafa] to-[#dedede] px-[3px] leading-4"><option>Longitud</option></select>
          <span class="pointer-events-none absolute top-0.5 right-0 flex h-4 w-4 items-center justify-center border-l border-[#aaa]"><svg class="h-[5px] w-[7px]" viewBox="0 0 9 5"><path d="M0 0h9L4.500 5z"/></svg></span></div>
        <div class="mt-[7px] flex items-center gap-1.5"><label for="lon">Longitud</label><input id="lon" type="text"></div>
        <div class="mt-[7px] flex items-center gap-1.5"><label for="tie">Tiempo</label><input id="tie" type="text"></div>
        <div class="mt-[9px] grid grid-cols-3 gap-2.5 [&>button]:h-[23px] [&>button]:rounded-sm [&>button]:border [&>button]:border-[#b0b0b0] [&>button]:bg-linear-to-b [&>button]:from-[#fcfcfc] [&>button]:to-[#dedede]">
          <button type="button">Calcular</button><button type="button">Exportar</button><button type="button">Limpiar</button>
        </div>
        <button type="button" class="mt-[9px] flex h-[26px] items-center justify-center gap-1 rounded-sm border border-[#b0b0b0] bg-linear-to-b from-[#fcfcfc] to-[#dedede]"><svg class="size-4"><use href="#life"/></svg>Ayuda</button>
      </form>
    </section>
    <div class="flex w-1.5 shrink-0 items-center pl-px"><svg class="h-[190px] w-[5px]"><rect width="5" height="190" fill="url(#gripV)"/></svg></div>

    <!-- map canvas -->
    <div class="min-w-0 flex-1 border-2 border-[#4f9ef4] bg-white">
    <svg class="block size-full" viewBox="394 204 924 567" preserveAspectRatio="xMinYMin slice" role="img" aria-label="Mapa">
      <g fill="url(#dots)">
        <path d="M700 335L710 328 640 397 643 404 612 427 637 457 617 473 615 483 622 500 631 522 618 532V570L492 729 502 741H525L555 723 632 623 658 640 683 623 645 687 595 728 645 746 680 707 720 647 743 627 765 610 830 572 870 549 900 532 945 507 1010 485 1077 465 1098 445 1119 427 1057 365 1123 307 1165 332 1209 293 1095 219 1025 274 1015 250 946 241 918 269 717 321z"/>
        <path d="M777 623L813 613 913 586 930 591 962 583 994 598 1020 662 1008 688 988 696H957L918 678 892 745 907 772H788L770 752 782 735 757 715 764 648 782 635z"/>
        <path d="M1005 738L1049 743 1045 769 1002 764zM832 210L838 204H851L854 210zM1098 204H1107L1104 209H1100zM1115 204H1130L1135 214 1120 208zM1149 370H1153L1152 386H1159L1156 415 1144 414 1148 386z"/>
      </g>
      <path d="M1140 228L1148 227 1152 232 1149 243 1143 244 1138 240V232z" fill="#7091bf" stroke="#222" stroke-width="1"/>
      <g fill="none" stroke="#61a04c" stroke-width="1.200">
        <path d="M418 204L412 223 415 258 418 264 426 266 433 271 430 277 423 281V290L428 297 443 312 445 332 443 342 437 352 429 358 420 373 415 387 418 402 404 414 396 445 395 467 394 472M394 660L400 678 402 697 410 712 417 738 422 757V772M394 732L412 736 417 740M683 624L668 638 663 648 650 657 637 673 622 685 620 698 613 706 601 707 590 714 571 717V737L565 753 559 761 561 772M943 204L962 224 970 237 973 244M1072 204L1073 210 1078 217 1076 226 1070 233 1058 235 1052 240 1051 246 1052 252"/>
      </g>
      <g fill="#22d39b" stroke="#000" stroke-width="1">
        <path d="M920 547L945 541 945 538 951 540 959 538 960 543 922 552zM521 536L529 538 528 542 521 540zM472 653L476 651 483 661 480 663zM443 370L445 366 449 368 447 372zM890 551L896 550 898 554 893 557zM432 686L436 684 437 688 433 689zM652 326L660 326 659 331 653 330zM661 322L666 322 666 326 662 325zM506 302L509 301 508 304 505 304zM511 299L514 300 511 304 510 302zM497 322L500 321 499 324 496 323zM859 578L866 576 866 578 860 579zM471 646L475 643 474 648z"/>
      </g>
      <g fill="none" stroke="#000" stroke-width="2.500">
        <path d="M423 645L425 649M427 644L429 648M431 642L433 646M437 680L439 682M502 313L504 314M501 322L503 324M475 398L477 400M670 328L674 324M672 331L674 331M566 431L569 434M558 430L560 431M582 433L589 431M552 407L554 408M526 541L529 542M518 548L520 549M591 729L594 731M593 734L592 737M496 753L498 755M577 746L582 748M546 501L547 502M875 556L879 554M852 569L854 567M855 565L857 562M836 591L837 592M844 587L846 588M868 576L870 577M483 650L485 651M943 539L947 539"/>
      </g>
      <g fill="none" stroke="#000" stroke-width="5" stroke-linejoin="round">
        <path d="M545 201L577 242 593 263 612 290 620 307Q625 318 642 323L657 322 670 318 687 320 692 323 702 337 712 345 723 357 740 372 755 387 767 397 787 411 813 435 847 462 887 495 903 507"/>
        <path d="M577 243L555 253 540 266 532 280 518 308 505 323 498 333 494 343 493 360 487 385 466 496M493 360L498 380 500 400 542 489M443 373L475 379 487 386M567 438L562 447 543 477V489"/>
        <path d="M392 477L425 499 466 496 530 491 542 489 590 474Q600 472 607 474L640 482 647 481 657 472 715 432M542 489L562 500 620 535 653 556 695 576"/>
        <path d="M408 487Q425 497 430 505 441 517 441 533 440 548 436 560 431 575 431 593 432 622 450 645 455 653 463 660L527 712 557 738 568 757 578 774"/>
        <path d="M392 754L412 756H463Q470 755 475 752L513 723 553 692 600 642 627 598 657 555 665 540 670 535 710 508M513 723L530 740 542 757 545 774M530 740L524 755 518 774M540 701L580 718 610 727 633 738M610 727L627 711M618 717L640 727"/>
        <path d="M611 774L640 727 673 682 710 650 740 620 767 603 817 570M641 774L657 745 710 673 737 637 760 615 810 585 873 548 933 517 953 510 1023 490 1050 482 1080 477 1143 471 1243 461Q1265 459 1277 460 1300 461 1320 467"/>
        <path d="M642 579L689 607M657 590L643 615M648 610L657 613 668 597M673 603L662 620 665 625 672 622 683 607M680 532L700 543 737 568M690 540L682 548 703 563 713 552 745 530M725 560L732 557M642 510L670 535M642 510L653 502 675 490 698 467 723 457 732 448 740 438 783 411 825 383 848 365 867 347 897 328Q908 324 918 332L923 347M655 520L700 488 755 451"/>
        <path d="M613 427L682 382 732 450M613 427L673 490M630 443L692 400M643 457L705 417M647 405L702 465 713 480 733 497 750 512 773 533 813 573 822 587M720 503L743 528 777 559M700 515L732 493 780 460 815 437 863 400 908 363 923 350Q933 340 950 339 970 334 983 348L1003 363 1027 377 1053 390 1073 403 1100 430 1113 440Q1130 454 1153 453L1227 444Q1240 444 1250 458 1255 470 1242 482L1212 500Q1195 512 1195 527 1197 560 1220 592L1255 650 1320 720"/>
        <path d="M700 542L747 512 770 490 792 473M758 520L803 483M772 532L815 497M755 475L793 512M780 460L812 490 853 530 873 548M822 567L853 532 887 497 917 463 967 410M882 532L930 480 983 422 1027 377M917 489L932 497 922 512M813 488L847 463"/>
        <path d="M732 467L770 440 787 450 808 430M762 427L783 437M775 418L782 427 768 437M822 430L850 453M847 462L850 453 862 433 887 415 920 395 933 382M842 417L862 433M807 402L832 422M827 385L852 407M835 380L863 400"/>
        <path d="M768 321L775 340 792 336M779 318L817 310 827 345 847 363M779 318L808 358 832 378 863 400M787 328L820 322M800 345L825 342M793 365L810 360 827 347M826 303L847 362M844 305L853 333 865 345 897 372M843 347L865 344M862 289L875 323 865 345M875 323L887 319 900 324M883 286L932 273 942 297 936 310M885 287L890 303 888 319M890 303L938 290M907 302L913 307 947 317 963 308"/>
        <path d="M669 318L670 308 693 280 700 275 778 230 783 220V202M780 224L787 232 857 213 867 206Q880 203 897 213L913 228 918 243 930 247 938 255 957 288 967 315 963 322 945 335 923 350M955 287L957 272 993 252 995 240 983 202M993 252L1018 287M998 277L1006 273M937 325L945 335M957 328L963 339"/>
        <path d="M712 343L740 321M725 357L753 333M730 382L763 353 767 357V375L747 393M855 370L877 390M867 363L897 393M848 375L877 353M897 355L900 348 913 338 920 342M897 355L908 363M870 397L888 417 907 435 930 448M903 452L930 418 947 428M913 457L940 427M860 470L883 443H893L932 478"/>
        <path d="M908 363L957 398 983 420 1007 435 1082 450 1097 433M957 398L993 360M945 385L972 355M953 373L967 381 973 380 997 402M995 423L1003 420M1005 432L1013 423M1017 440L1005 468M1007 463L1025 468 1050 460 1067 450M1033 443L1025 476M1045 443L1046 427 1052 410 1057 406 1090 437M1060 443L1059 432 1062 422 1067 418M1073 433L1078 428"/>
        <path d="M947 463L970 473M957 470L952 483M930 483L940 485 973 486"/>
        <path d="M983 348L1053 280 1088 304M1003 363L1042 325 1093 272 1127 235 1143 220 1128 202M1143 220L1157 225 1165 233 1180 238 1193 250 1198 258 1217 271 1209 290 1207 313 1201 338 1163 344 1149 355 1146 383 1131 428 1113 441M1095 202L1096 213 1102 217 1128 235M1125 240L1098 224 1070 253 1110 282 1117 279 1133 288 1180 284Q1190 288 1187 297L1168 315M1085 317L1117 286M1023 313L1063 338Q1070 341 1078 335L1089 323 1085 317M1125 283L1147 263 1170 278M1137 277L1157 276M1148 299L1187 295M1153 288L1155 305 1160 308 1175 307M1015 353L1023 347 1028 352 1020 358z"/>
        <path d="M1252 202L1250 213 1257 227 1266 232"/>
        <path d="M822 567V587L840 605 857 645 865 657 900 667 933 682 953 693 990 727Q995 733 1005 735L1057 743Q1063 745 1066 749L1083 774M823 580L860 573 875 568Q886 561 881 552L873 548M860 560L865 568"/>
        <path d="M778 630L820 620M912 587L815 615 827 647M823 626L922 597M825 639L928 611 943 648 910 657M833 652L957 616M893 592L920 660M917 642L938 637M803 623L807 637 825 639M807 643L818 652M767 653L787 637 807 639M767 653L762 683M775 650L780 656"/>
        <path d="M778 660L790 650 847 690 853 692 882 713 890 737 889 744M778 660L777 678 788 687 797 682M790 677L789 667 797 665 837 698 815 713 803 702 815 692 825 702M762 683L817 727 853 757 863 774M787 702L813 680M803 673L813 663M827 675L843 663 845 670M840 672L855 678M865 657L847 700 815 727 790 752M802 720L772 750 792 774M802 720H770L760 712 762 693 768 688M782 718L773 707 775 698M827 735L840 723 857 712 863 718 840 727M828 715L840 723"/>
        <path d="M780 758L790 752 807 774M800 753L815 743 842 763 833 774M803 763L820 748M813 774L828 753M824 774L835 758M875 657L878 650 902 645 910 667M887 662L903 657M920 660L957 680M930 653L957 668 967 687"/>
        <path d="M938 593L962 589 987 602 998 633 1013 662 1005 683 987 691M938 593L943 605 962 600 977 607 997 647 1000 663 995 677 950 693M955 605L967 638 998 633M973 600L967 613 977 633M983 678L968 645 990 640M983 647L990 667 995 673"/>
        <path d="M752 443L762 434M754 447L768 436" stroke-width="8"/><path d="M966 471L971 474M966 484L973 486" stroke-width="8" stroke-linecap="round"/>
      </g>
    </svg>
    </div>
  </div>

  <!-- status bar -->
  <footer class="flex h-[27px] items-center gap-[3px] pb-0.5 pl-1.5">
    <p class="w-[520px] shrink-0">Alterna el estado de edición de la capa activa</p>
    <button class="flex h-[22px] w-6 items-center justify-center border border-[#888] bg-[#e8e8e8]" aria-label="Alternar coordenadas"><svg class="size-[18px]" viewBox="0 0 18 18"><ellipse cx="6" cy="6" rx="3" ry="5" fill="none" stroke="#222" stroke-width="2" transform="rotate(25 6 6)"/><ellipse cx="11.500" cy="12" rx="3.500" ry="5" fill="#ccc" stroke="#222" stroke-width="1.600" transform="rotate(-30 11.500 12)"/><path d="M2 9l9 5M9 1l-5 9M11 5l5-3" stroke="#222" stroke-width="1.400"/></svg></button>
    <label for="coord" class="flex h-[22px] w-[73px] items-center justify-center border border-[#888]">Coordenada:</label>
    <input id="coord" class="h-[22px] min-w-0 flex-1 rounded-sm border-2 border-[#a8a8a8] bg-white text-center" value="20.43726,-34.00968">
    <label for="scale" class="flex h-[22px] w-[42px] items-center justify-center border border-[#888]">Escala</label>
    <div class="relative"><select id="scale" class="block h-[22px] w-[92px] appearance-none rounded-sm border-2 border-[#a8a8a8] bg-white px-1"><option>1:14.363</option></select><span class="pointer-events-none absolute inset-y-0.5 right-0.5 flex w-4 items-center justify-center border-l border-[#aaa] bg-[#eee]"><svg class="h-[5px] w-[7px]" viewBox="0 0 9 5"><path d="M0 0h9L4.500 5z"/></svg></span></div>
    <button class="flex h-[22px] w-[23px] items-center justify-center border border-[#888] bg-[#e8e8e8]" aria-label="Detener dibujado"><svg class="size-[18px]" viewBox="0 0 18 18"><path d="M17 2l-5 8" stroke="#777" stroke-width="2.400"/><path d="M12 9c-4 2-2 5-6 8 5 0 8-3 8-7z" fill="#777"/><circle cx="6.500" cy="6" r="4.500" fill="#fff" fill-opacity=".6" stroke="#e0393e" stroke-width="1.600"/><path d="M3.500 9l6-6" stroke="#e0393e" stroke-width="1.600"/></svg></button>
    <label class="flex h-[22px] w-[87px] items-center gap-1.5 border border-[#888] pl-0.5"><span class="relative flex size-[13px]"><input type="checkbox" checked class="size-[13px] appearance-none border border-[#bbb] bg-white"><svg class="pointer-events-none absolute inset-0 size-[13px]" viewBox="0 0 13 13"><path d="M3 3l7 7M10 3l-7 7" stroke="#000" stroke-width="3"/></svg></span>Representar</label>
    <span class="flex h-[22px] w-[63px] items-center justify-center border border-[#999] text-[#888]">EPSG:4326</span>
    <button class="flex h-[22px] w-[22px] items-center justify-center border border-[#888] bg-[#e0e0e0]" aria-label="Estado SRC"><svg class="size-[18px]" viewBox="0 0 18 18"><circle cx="9" cy="9" r="7.500" fill="#999" stroke="#777"/><ellipse cx="9" cy="9" rx="4" ry="7" fill="none" stroke="#ddd"/><path d="M9 0v4M9 14v4M0 9h4M14 9h4M2 5.500h14M2 12.500h14" stroke="#ddd"/><path d="M6 6h6v6H6z" fill="#bbb" stroke="#888"/></svg></button>
  </footer>
</main>
</div>

<script>
  const layers = [
    ['roads', 'tline', '<path d="M0 5.500h16v5H0z"/>'],
    ['landuse', 'tpolyb', '<path d="M0 0h16v16H0z" fill="#cfcf00"/><path d="M2 2.500h13M2 6.500h13M2 10.500h13M2 14.500h13" stroke="#222" stroke-dasharray="1 3"/>'],
    ['water', 'tpoly', '<path d="M.5.500h15v15H.500z" fill="#7091bd" stroke="#2e4468"/>'],
    ['rivers', 'tline', '<path d="M0 8.500h16" stroke="#61a04c"/>'],
    ['places', 'tpt', '<circle cx="8" cy="8" r="3.800" fill="#a6f5d6" stroke="#111" stroke-width="1.200"/>'],
    ['buildings', 'tpoly', '<path d="M.5.500h15v15H.500z" fill="#26d79f" stroke="#1a7a5c"/>']
  ];
  document.getElementById('layers').innerHTML = layers.map(([name, icon, legend], i) => `
    <li>
      <div class="flex h-4 items-center ${i === 1 ? 'bg-[#f0f0f0]' : ''}">
        <svg class="ml-1.5 size-4" viewBox="0 0 16 16"><path d="M4.500 0v4M4.500 12v4M9 7.500h7" stroke="#999" stroke-dasharray="1 1"/><path d="M.5 3.500h8v8h-8z" fill="#fff" stroke="#777"/><path d="M2 7.500h5" stroke="#222"/></svg>
        <label class="flex items-center"><span class="relative ml-0.5 flex size-[13px]"><input type="checkbox" checked class="size-[13px] appearance-none border border-[#bbb] bg-white"><svg class="pointer-events-none absolute inset-0 size-[13px]" viewBox="0 0 13 13"><path d="M3 3l7 7M10 3l-7 7" stroke="#000" stroke-width="3"/></svg></span>
        <svg class="mr-[5px] ml-1.5 h-4 w-[17px]"><use href="#${icon}"/></svg><span class="pt-0.5 ${i === 1 ? 'underline' : ''}">${name}</span></label>
      </div>
      <div class="flex h-4 pl-1.5"><svg class="h-4 w-[38px]" viewBox="0 0 38 16"><path d="M4.500 0v${i < 5 ? 16 : 0}M25.500 2v6h10" fill="none" stroke="#999" stroke-dasharray="1 1"/></svg><svg class="size-4" viewBox="0 0 16 16">${legend}</svg></div>
    </li>`).join('');
</script>
</body>
</html>
